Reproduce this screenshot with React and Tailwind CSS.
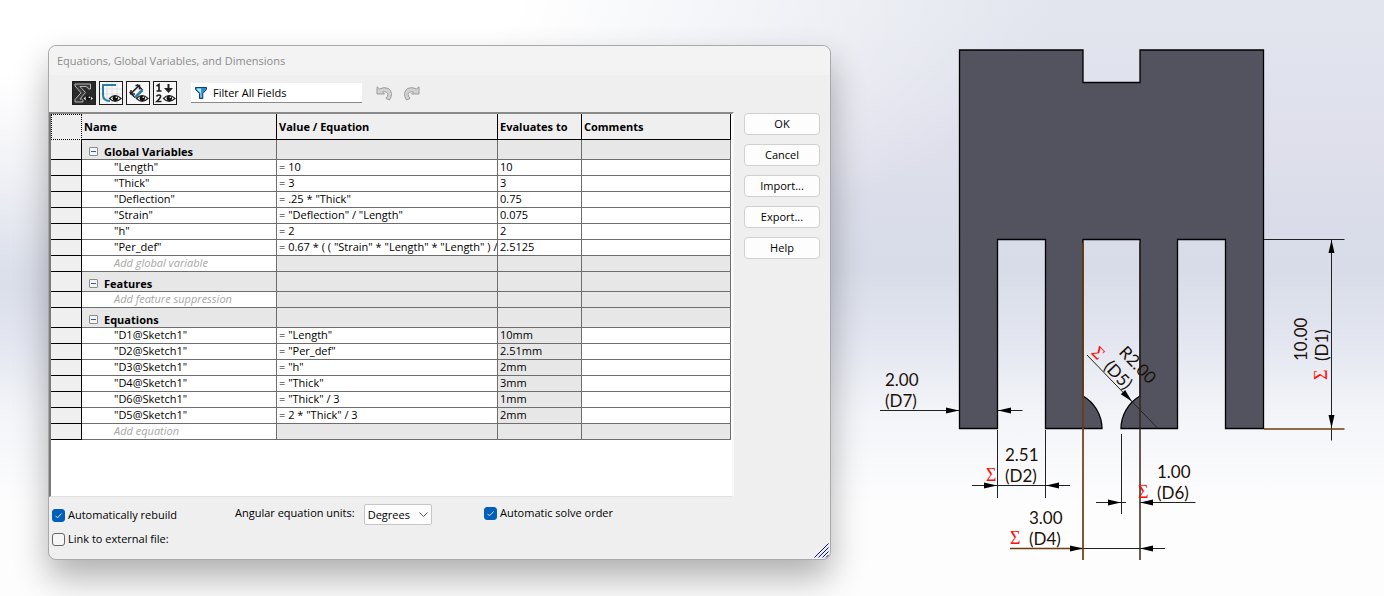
import { useState } from 'react';

const GROUPS = [
  {
    title: 'Global Variables',
    placeholder: 'Add global variable',
    rows: [
      ['"Length"', '= 10', '10'],
      ['"Thick"', '= 3', '3'],
      ['"Deflection"', '= .25 * "Thick"', '0.75'],
      ['"Strain"', '= "Deflection" / "Length"', '0.075'],
      ['"h"', '= 2', '2'],
      ['"Per_def"', '= 0.67 * ( ( "Strain" * "Length" * "Length" ) /', '2.5125'],
    ],
  },
  { title: 'Features', placeholder: 'Add feature suppression', rows: [] },
  {
    title: 'Equations',
    placeholder: 'Add equation',
    readOnly: true,
    rows: [
      ['"D1@Sketch1"', '= "Length"', '10mm'],
      ['"D2@Sketch1"', '= "Per_def"', '2.51mm'],
      ['"D3@Sketch1"', '= "h"', '2mm'],
      ['"D4@Sketch1"', '= "Thick"', '3mm'],
      ['"D6@Sketch1"', '= "Thick" / 3', '1mm'],
      ['"D5@Sketch1"', '= 2 * "Thick" / 3', '2mm'],
    ],
  },
];

const ACTIONS = ['OK', 'Cancel', 'Import...', 'Export...', 'Help'];

function Eye() {
  return (
    <g>
      <path d="M10.500 17.500 Q16 11.500 22 17.500 Q16 23 10.500 17.500Z" fill="#fff" stroke="#222" strokeWidth="1.200" />
      <circle cx="16.300" cy="17.300" r="2.700" fill="#111" />
      <circle cx="17.300" cy="16.300" r="0.800" fill="#fff" />
    </g>
  );
}

function EquationViewIcon() {
  return (
    <svg viewBox="1 1 22 22" className="size-full bg-[#2a2a2a]" aria-hidden="true">
      <path
        d="M3 3 H18.500 V8 H16.500 Q16 5.500 13 5.500 H8 L13.500 11.500 L8 18 H11 V21 H3 V18.500 L9 11.800 L3 5Z"
        fill="#3a3a3a"
        stroke="#b5b5b5"
        strokeWidth="1"
      />
      <Eye />
    </svg>
  );
}

function SketchViewIcon() {
  return (
    <svg viewBox="1 1 22 22" className="size-full bg-[#f8f8f8]" aria-hidden="true">
      <path d="M8 1V23 M13 1V23 M18 1V23 M1 8H23 M1 13H23 M1 18H23" stroke="#dcdfe2" strokeWidth="1" />
      <path d="M17 4H4V14Q4 20 11 20" fill="none" stroke="#2a7ea8" strokeWidth="2" />
      <Eye />
    </svg>
  );
}

function DimensionViewIcon() {
  return (
    <svg viewBox="1 1 22 22" className="size-full bg-[#f8f8f8]" aria-hidden="true">
      <path d="M3.500 11 L9 16.500 M11 3.500 L16.500 9" stroke="#222" strokeWidth="1.500" />
      <path d="M5.500 12 L12.500 5" stroke="#222" strokeWidth="1.700" />
      <path d="M5 9 V13 H9 M9.500 4.500 H13.500 V8.500" fill="none" stroke="#222" strokeWidth="1.500" />
      <path d="M9 16.500 L16.500 9" stroke="#2a7ea8" strokeWidth="2.500" />
      <Eye />
    </svg>
  );
}

function OrderViewIcon() {
  return (
    <svg viewBox="1 1 22 22" className="size-full bg-[#f8f8f8]" aria-hidden="true">
      <path d="M3.500 5 L6 3.500 V10 M3.500 10H8.500" fill="none" stroke="#222" strokeWidth="1.700" />
      <path d="M3.500 15.500 Q4 14 6 14 Q8 14 7.500 16 Q7 17.500 3.800 20.500 H8.500" fill="none" stroke="#222" strokeWidth="1.700" />
      <path d="M15.500 3V9" stroke="#222" strokeWidth="2" />
      <path d="M11 7 H20 L15.500 12Z" fill="#222" />
      <Eye />
    </svg>
  );
}

function FunnelIcon() {
  return (
    <svg viewBox="0 0 12 12" className="size-3 shrink-0" aria-hidden="true">
      <path d="M0.500 0.500H11.500V2.500L7.800 6.500V11.500H4.500V6.500L0.500 2.500Z" fill="#2b8fc9" stroke="#123a86" strokeWidth="1" />
      <path d="M2 1.500H6L6.500 10.500H5.500V6L2 2.500Z" fill="#b7edf8" />
    </svg>
  );
}

function UndoIcon({ flipped = false }) {
  return (
    <svg viewBox="0 0 17 15" className={flipped ? 'h-[15px] w-[17px] -scale-x-100' : 'h-[15px] w-[17px]'} aria-hidden="true">
      <path
        d="M1 0.800 L3.500 3 Q8 0.500 12.500 2.500 Q18 7 13.500 14 L10 12.500 Q13.500 8 10.500 6.300 Q8.500 5.200 6.500 6 L8.500 8 H1Z"
        fill="#d2d2d2"
        stroke="#9c9c9c"
        strokeWidth="1"
      />
    </svg>
  );
}

const VIEWS = [
  ['Equation view', EquationViewIcon],
  ['Sketch equation view', SketchViewIcon],
  ['Dimension view', DimensionViewIcon],
  ['Ordered view', OrderViewIcon],
];

function Toolbar() {
  const [filter, setFilter] = useState('Filter All Fields');
  return (
    <div className="flex h-9 items-center pl-[23px]">
      <div className="flex gap-[3px]">
        {VIEWS.map(([label, Icon]) => (
          <button key={label} type="button" aria-label={label} className="size-6 border border-[#1c1c1c]">
            <Icon />
          </button>
        ))}
      </div>
      <label className="ml-[14px] flex h-5 w-[171px] items-center gap-[6px] border-b border-[#8a8a8a] bg-white pl-1">
        <FunnelIcon />
        <input
          type="text"
          aria-label="Filter"
          value={filter}
          onChange={(e) => setFilter(e.target.value)}
          className="w-full min-w-0 outline-none"
        />
      </label>
      <div className="ml-[14px] flex gap-[10px]">
        <button type="button" aria-label="Undo">
          <UndoIcon />
        </button>
        <button type="button" aria-label="Redo">
          <UndoIcon flipped />
        </button>
      </div>
    </div>
  );
}

function Group({ group }) {
  const [open, setOpen] = useState(true);
  const blank = 'border-r border-b border-[#6e6e6e] bg-[#e7e7e7]';
  const cell = 'overflow-hidden border-r border-b border-[#6e6e6e] pl-[2px] align-top leading-[14px] whitespace-nowrap';
  const nameCell = 'overflow-hidden border-r border-b border-[#6e6e6e] pl-8 align-top leading-[14px] whitespace-nowrap';
  const handle = 'border-r border-b border-black bg-[#efefef]';

  return (
    <tbody>
      <tr className="h-5">
        <td className={handle} />
        <th scope="rowgroup" className="border-r border-b border-[#6e6e6e] bg-[#e7e7e7] pt-1 text-left font-bold">
          <div className="flex h-[15px] items-center gap-[6px] pl-[7px]">
            <button
              type="button"
              aria-label={`Toggle ${group.title}`}
              onClick={() => setOpen(!open)}
              className="flex size-[9px] items-center justify-center rounded-[1px] border border-[#8c8c8c] bg-[#f4f4f4]"
            >
              <span className="h-px w-[5px] bg-[#3b5998]" />
            </button>
            {group.title}
          </div>
        </th>
        <td className={blank} />
        <td className={blank} />
        <td className={blank} />
      </tr>
      {open &&
        group.rows.map(([name, value, result]) => (
          <tr key={name} className="h-4">
            <td className={handle} />
            <td className={nameCell}>{name}</td>
            <td className={cell}>{value}</td>
            <td className={group.readOnly ? `${cell} bg-[#e7e7e7]` : cell}>{result}</td>
            <td className={cell} />
          </tr>
        ))}
      {open && (
        <tr className="h-4">
          <td className={handle} />
          <td className={`${nameCell} text-[#a6a6a6] italic`}>{group.placeholder}</td>
          <td className={blank} />
          <td className={blank} />
          <td className={blank} />
        </tr>
      )}
    </tbody>
  );
}

function EquationTable() {
  const head = 'border-r border-b border-black bg-[#efefef] px-[2px] text-left font-bold';
  return (
    <div className="flex-1 border-t-2 border-r-2 border-b border-l-2 border-t-[#8a8a8a] border-r-[#f8f8f8] border-b-[#e0e0e0] border-l-[#7a7a7a] bg-white pr-px pb-14">
      <table className="w-full table-fixed border-separate border-spacing-0 leading-[15px]">
        <colgroup>
          <col className="w-[31px]" />
          <col className="w-[195px]" />
          <col className="w-[221px]" />
          <col className="w-[84px]" />
          <col />
        </colgroup>
        <thead>
          <tr className="h-[26px]">
            <td className="border border-dotted border-black bg-[#efefef]" />
            <th scope="col" className={head}>Name</th>
            <th scope="col" className={head}>Value / Equation</th>
            <th scope="col" className={head}>Evaluates to</th>
            <th scope="col" className={head}>Comments</th>
          </tr>
        </thead>
        {GROUPS.map((group) => (
          <Group key={group.title} group={group} />
        ))}
      </table>
    </div>
  );
}

function CheckField({ label, defaultChecked = false }) {
  return (
    <label className="flex h-4 items-center gap-[3px]">
      <span className="relative flex">
        <input
          type="checkbox"
          defaultChecked={defaultChecked}
          className="peer size-[13px] appearance-none rounded-[3px] border border-[#666] bg-[#f6f6f6] checked:border-[#005fb8] checked:bg-[#005fb8]"
        />
        <svg viewBox="0 0 13 13" className="pointer-events-none absolute inset-0 hidden size-[13px] peer-checked:block" aria-hidden="true">
          <path d="M3.500 6.800 L5.500 8.800 L9.500 4.500" fill="none" stroke="#d5e6f7" strokeWidth="1" />
        </svg>
      </span>
      {label}
    </label>
  );
}

function Footer() {
  return (
    <div className="flex items-start pt-[7px] pl-[3px]">
      <div className="flex w-[183px] flex-col gap-2 pt-[3px]">
        <CheckField label="Automatically rebuild" defaultChecked />
        <CheckField label="Link to external file:" />
      </div>
      <div className="flex w-[249px] items-center gap-[9px]">
        <label htmlFor="units" className="pb-1 whitespace-nowrap">Angular equation units:</label>
        <div className="relative">
          <select id="units" defaultValue="Degrees" className="h-[21px] w-[68px] appearance-none rounded-[2px] border border-[#c6c6c6] bg-[#fdfdfd] pl-[3px]">
            <option>Degrees</option>
            <option>Radians</option>
          </select>
          <svg viewBox="0 0 9 5" className="pointer-events-none absolute top-2 right-1 h-[5px] w-[9px]" aria-hidden="true">
            <path d="M0.500 0.500 L4.500 4.500 L8.500 0.500" fill="none" stroke="#555" />
          </svg>
        </div>
      </div>
      <div className="pt-px">
        <CheckField label="Automatic solve order" defaultChecked />
      </div>
    </div>
  );
}

function EquationsDialog() {
  return (
    <section
      aria-labelledby="dialog-title"
      className="relative self-start rounded-lg border border-[#a9a9a9] bg-[#efefef] pb-3 font-['Open_Sans','Noto_Sans',sans-serif] text-[11px] leading-4 text-black shadow-[0_18px_34px_rgba(0,0,0,0.3)]"
    >
      <h1 id="dialog-title" className="rounded-t-lg bg-[#f3f3f3] px-2 pt-[7px] pb-[6px] text-[#8c8c8c]">
        Equations, Global Variables, and Dimensions
      </h1>
      <Toolbar />
      <div className="flex gap-[10px] pt-px pr-[10px]">
        <EquationTable />
        <div className="flex w-[76px] flex-col gap-[9px] pt-px">
          {ACTIONS.map((action) => (
            <button key={action} type="button" className="h-[22px] rounded border border-[#d0d0d0] bg-[#fdfdfd]">
              {action}
            </button>
          ))}
        </div>
      </div>
      <Footer />
      <svg viewBox="0 0 15 15" className="absolute right-px bottom-px size-[15px]" aria-hidden="true">
        <path d="M0.500 14.500 L14.500 0.500 M4.500 14.500 L14.500 4.500 M8.500 14.500 L14.500 8.500 M12 14.500 L14.500 12" stroke="#0c0c9c" />
      </svg>
    </section>
  );
}

function Arrow({ x, y, angle = 0 }) {
  return <path d="M0 0 L-13 -3 V3Z" fill="#000" transform={`translate(${x} ${y}) rotate(${angle})`} />;
}

function Dimension({ x, y, value, name, angle = 0, linked = true }) {
  return (
    <g transform={`translate(${x} ${y}) rotate(${angle})`}>
      <text x="0" y="0">{value}</text>
      <text x="0" y="21">{name}</text>
      {linked && (
        <text x="-19" y="20" className="fill-[#ff1008] font-['Liberation_Serif',serif] text-[18px]">Σ</text>
      )}
    </g>
  );
}

function PartDrawing() {
  return (
    <svg viewBox="870 40 490 530" className="w-full font-['Lato',sans-serif] text-[17px]" role="img" aria-label="Dimensioned part">
      <path
        d="M959.500 50 H1083 V82.500 H1140 V50 H1263.500 V428.500 H1225.500 V239.500 H1177.500 V428.500 H1121 A38 38 0 0 1 1140 396 V239.500 H1083 V396 A38 38 0 0 1 1102 428.500 H1045.500 V239.500 H997.500 V428.500 H959.500Z"
        fill="#52535f"
        stroke="#000"
        strokeWidth="1.300"
      />
      <g fill="none" stroke="#222" strokeWidth="1">
        <path d="M880 410.500H959 M998 410.500H1022.500" />
        <path d="M997.500 430V498 M1045.500 430V498 M972 485.500H1070" />
        <path d="M1121.500 434V514 M1096 502.500H1126 M1140 502.500H1195.500" />
        <path d="M1083 548.500H1165 M1087 355L1158 428.500" />
        <path d="M1264 239.500H1344.500 M1331.500 239V440.500" />
      </g>
      <g fill="none" stroke="#6b3d0e">
        <path d="M1083 243V560 M1010 548.500H1083" strokeWidth="1.700" />
        <path d="M1264 429H1344.500" strokeWidth="1.300" />
        <path d="M1140 243V560" stroke="#33251c" strokeWidth="1.500" />
      </g>
      <Arrow x={959} y={410.5} />
      <Arrow x={998} y={410.5} angle={180} />
      <Arrow x={997} y={485.5} />
      <Arrow x={1046} y={485.5} angle={180} />
      <Arrow x={1121} y={502.5} />
      <Arrow x={1140} y={502.5} angle={180} />
      <Arrow x={1083} y={548.5} />
      <Arrow x={1140} y={548.5} angle={180} />
      <Arrow x={1132} y={401.5} angle={46} />
      <Arrow x={1331.5} y={240} angle={-90} />
      <Arrow x={1331.5} y={428} angle={90} />
      <g fill="#1c1108">
        <Dimension x={885} y={386} value="2.00" name="(D7)" linked={false} />
        <Dimension x={1005} y={461} value="2.51" name="(D2)" />
        <Dimension x={1029} y={524} value="3.00" name="(D4)" />
        <Dimension x={1157} y={478} value="1.00" name="(D6)" />
        <Dimension x={1118} y={353} value="R2.00" name="(D5)" angle={46} />
        <Dimension x={1307} y={361} value="10.00" name="(D1)" angle={-90} />
      </g>
    </svg>
  );
}

export default function App() {
  return (
    <main className="min-h-screen bg-[radial-gradient(ellipse_840px_300px_at_16%_0%,#ffffff_35%,transparent),linear-gradient(to_bottom,#e2e5ee_0%,#dedfeb_25%,#d7dce8_45%,#e3e6f0_57%,#f4f5f9_70%,#fdfdfe_85%)] pt-[45px] pr-6 pb-6 pl-12">
      <div className="grid grid-cols-[783fr_490fr] gap-[39px]">
        <EquationsDialog />
        <div className="-mt-[5px]">
          <PartDrawing />
        </div>
      </div>
    </main>
  );
}
